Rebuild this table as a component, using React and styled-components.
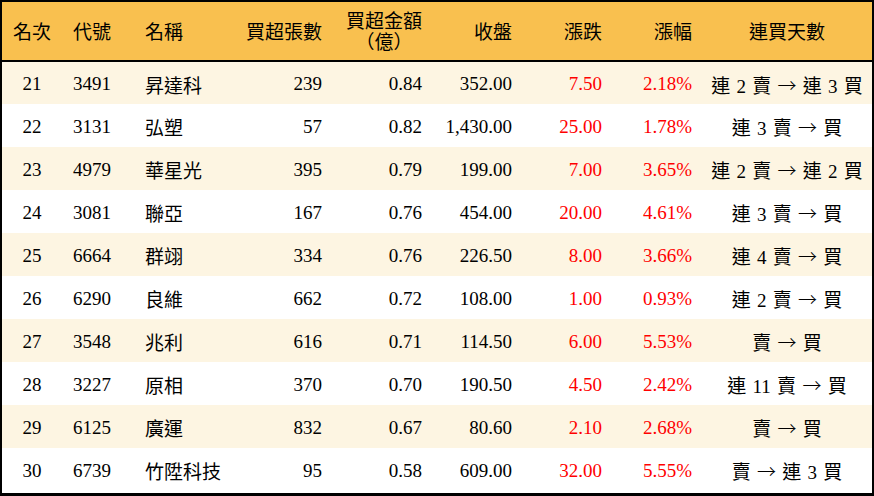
import React from "react";
import styled, { createGlobalStyle } from "styled-components";

const GlobalStyle = createGlobalStyle`
  html, body {
    margin: 0;
    padding: 0;
    background: #ffffff;
  }
`;

const Frame = styled.div`
  width: 874px;
  height: 496px;
  box-sizing: border-box;
  border: 2px solid #000;
  border-bottom-width: 3px;
  background: #fff;
  overflow: hidden;
  font-family: "Liberation Serif", "Noto Sans CJK TC", serif;
  font-size: 19px;
  color: #000;
`;

const Table = styled.table`
  width: 100%;
  border-collapse: collapse;
  table-layout: fixed;
`;

const HeadRow = styled.tr`
  height: 59px;
  background: #f9c04f;
  border-bottom: 2px solid #000;
`;

const Th = styled.th`
  font-weight: normal;
  text-align: ${(p) => p.$align || "left"};
  padding: 2px ${(p) => p.$pr || 0}px 0 ${(p) => p.$pl || 0}px;
  line-height: 21px;
  vertical-align: middle;
  white-space: nowrap;
`;

const Stack = styled.span`
  display: inline-block;
  text-align: center;
`;

const Row = styled.tr`
  height: 43px;
  background: ${(p) => (p.$odd ? "#fdf5e2" : "#ffffff")};
`;

const Td = styled.td`
  text-align: ${(p) => p.$align || "left"};
  padding: 2px ${(p) => p.$pr || 0}px 0 ${(p) => p.$pl || 0}px;
  color: ${(p) => (p.$red ? "#ff0000" : "#000")};
  vertical-align: middle;
  white-space: nowrap;
`;

const Streak = styled(Td)`
  text-align: center;
  word-spacing: 1.5px;
`;

const Arrow = styled.span`
  font-family: "Noto Sans CJK TC", sans-serif;
  font-weight: 300;
`;

const cols = [60, 70, 100, 100, 100, 90, 90, 90, 170];

const rows = [
  [21, "3491", "昇達科", "239", "0.84", "352.00", "7.50", "2.18%", "連 2 賣", "連 3 買"],
  [22, "3131", "弘塑", "57", "0.82", "1,430.00", "25.00", "1.78%", "連 3 賣", "買"],
  [23, "4979", "華星光", "395", "0.79", "199.00", "7.00", "3.65%", "連 2 賣", "連 2 買"],
  [24, "3081", "聯亞", "167", "0.76", "454.00", "20.00", "4.61%", "連 3 賣", "買"],
  [25, "6664", "群翊", "334", "0.76", "226.50", "8.00", "3.66%", "連 4 賣", "買"],
  [26, "6290", "良維", "662", "0.72", "108.00", "1.00", "0.93%", "連 2 賣", "買"],
  [27, "3548", "兆利", "616", "0.71", "114.50", "6.00", "5.53%", "賣", "買"],
  [28, "3227", "原相", "370", "0.70", "190.50", "4.50", "2.42%", "連 11 賣", "買"],
  [29, "6125", "廣運", "832", "0.67", "80.60", "2.10", "2.68%", "賣", "買"],
  [30, "6739", "竹陞科技", "95", "0.58", "609.00", "32.00", "5.55%", "賣", "連 3 買"],
];

export default function App() {
  return (
    <>
      <GlobalStyle />
      <Frame>
        <Table>
          <colgroup>
            {cols.map((w, i) => (
              <col key={i} style={{ width: w }} />
            ))}
          </colgroup>
          <thead>
            <HeadRow>
              <Th $align="center">名次</Th>
              <Th $pl={11}>代號</Th>
              <Th $pl={13}>名稱</Th>
              <Th $align="right" $pr={10}>買超張數</Th>
              <Th $align="right" $pr={10}>
                <Stack>
                  買超金額
                  <br />
                  （億）
                </Stack>
              </Th>
              <Th $align="right" $pr={10}>收盤</Th>
              <Th $align="right" $pr={10}>漲跌</Th>
              <Th $align="right" $pr={10}>漲幅</Th>
              <Th $align="center">連買天數</Th>
            </HeadRow>
          </thead>
          <tbody>
            {rows.map((r, i) => (
              <Row key={r[0]} $odd={i % 2 === 0}>
                <Td $align="center">{r[0]}</Td>
                <Td $pl={11}>{r[1]}</Td>
                <Td $pl={13}>{r[2]}</Td>
                <Td $align="right" $pr={10}>{r[3]}</Td>
                <Td $align="right" $pr={10}>{r[4]}</Td>
                <Td $align="right" $pr={10}>{r[5]}</Td>
                <Td $align="right" $pr={10} $red>{r[6]}</Td>
                <Td $align="right" $pr={10} $red>{r[7]}</Td>
                <Streak>
                  {r[8]} <Arrow>→</Arrow> {r[9]}
                </Streak>
              </Row>
            ))}
          </tbody>
        </Table>
      </Frame>
    </>
  );
}
